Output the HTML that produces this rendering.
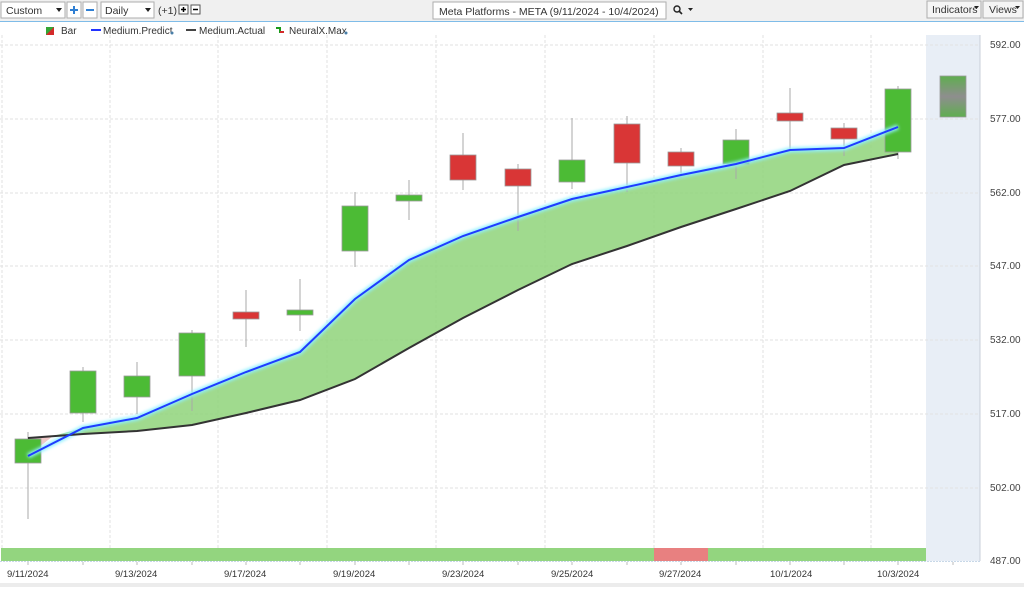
<!DOCTYPE html>
<html><head><meta charset="utf-8"><style>
body{margin:0;width:1024px;height:587px;overflow:hidden;background:#fff;font-family:"Liberation Sans",sans-serif}
svg text{font-family:"Liberation Sans",sans-serif}
</style></head><body>
<svg width="1024" height="587" xmlns="http://www.w3.org/2000/svg">
<defs>
<linearGradient id="fg" x1="0" y1="0" x2="0" y2="1">
<stop offset="0" stop-color="#5fae4f"/><stop offset="0.5" stop-color="#8e8e8e"/><stop offset="1" stop-color="#5fae4f"/>
</linearGradient>
<filter id="glow"><feGaussianBlur stdDeviation="1.5"/></filter>
</defs>
<rect x="0" y="0" width="1024" height="21" fill="#f0f0f0"/>
<rect x="0" y="21" width="1024" height="1" fill="#7fbce8"/>
<rect x="1" y="2" width="64" height="16" fill="#fff" stroke="#adadad"/>
<text x="6" y="14" font-size="10.5" fill="#333">Custom</text>
<path d="M56 8 h6 l-3 4z" fill="#222"/>
<rect x="67" y="2" width="14" height="16" fill="#fff" stroke="#adadad"/>
<path d="M70 10 h8 M74 6 v8" stroke="#2f7fd3" stroke-width="2"/>
<rect x="83" y="2" width="14" height="16" fill="#fff" stroke="#adadad"/>
<path d="M86 10 h8" stroke="#2f7fd3" stroke-width="2"/>
<rect x="101" y="2" width="53" height="16" fill="#fff" stroke="#adadad"/>
<text x="105" y="14" font-size="10.5" fill="#333">Daily</text>
<path d="M145 8 h6 l-3 4z" fill="#222"/>
<text x="158" y="14" font-size="10.5" fill="#333">(+1)</text>
<rect x="179" y="5" width="9" height="9" fill="#fff" stroke="#555"/><path d="M181 9.5h5M183.5 7v5" stroke="#000" stroke-width="1.5"/>
<rect x="191" y="5" width="9" height="9" fill="#fff" stroke="#555"/><path d="M193 9.5h5" stroke="#000" stroke-width="1.5"/>
<rect x="433" y="2" width="233" height="17" fill="#fff" stroke="#adadad"/>
<text x="439" y="15" font-size="10.5" fill="#333">Meta Platforms - META (9/11/2024 - 10/4/2024)</text>
<circle cx="677" cy="9" r="3" fill="none" stroke="#222" stroke-width="1.4"/><path d="M679 11l3 3" stroke="#222" stroke-width="1.6"/>
<path d="M688 8h5l-2.5 3z" fill="#222"/>
<rect x="927" y="1" width="54" height="17" fill="#f5f5f5" stroke="#adadad"/>
<text x="932" y="13" font-size="10.5" fill="#333">Indicators</text><path d="M974 6h5l-2.5 3z" fill="#222"/>
<rect x="983" y="1" width="40" height="17" fill="#f5f5f5" stroke="#adadad"/>
<text x="989" y="13" font-size="10.5" fill="#333">Views</text><path d="M1015 6h5l-2.5 3z" fill="#222"/>
<path d="M46 27h8v8h-8z" fill="#35a535"/><path d="M54 27v8h-8z" fill="#d42a2a"/>
<text x="61" y="34" font-size="10" fill="#333">Bar</text>
<path d="M91 30h10" stroke="#2233ff" stroke-width="2"/>
<text x="103" y="34" font-size="10" fill="#333">Medium.Predict</text><circle cx="172" cy="33" r="1.5" fill="#4a7fa8"/>
<path d="M186 30h10" stroke="#444" stroke-width="2"/>
<text x="199" y="34" font-size="10" fill="#333">Medium.Actual</text>
<path d="M276 28h4v4h4" stroke="#1a9a1a" stroke-width="2" fill="none"/><path d="M280 32h4" stroke="#d42a2a" stroke-width="2"/>
<text x="289" y="34" font-size="10" fill="#333">NeuralX.Max</text><circle cx="346" cy="33" r="1.5" fill="#4a7fa8"/>
<rect x="926" y="35" width="54" height="526" fill="#e8eef6"/>
<g stroke="#e2e2e2" stroke-dasharray="3,2">
<path d="M0 45H980M0 119H980M0 193H980M0 266H980M0 340H980M0 414H980M0 488H980"/>
<path d="M2 35V561M110 35V561M218 35V561M327 35V561M436 35V561M545 35V561M654 35V561M763 35V561M871 35V561"/>
</g>
<path d="M980 35V561" stroke="#c8cfd8"/>
<g font-size="10" fill="#444">
<text x="990" y="48">592.00</text><text x="990" y="122">577.00</text><text x="990" y="196">562.00</text><text x="990" y="269">547.00</text><text x="990" y="343">532.00</text><text x="990" y="417">517.00</text><text x="990" y="491">502.00</text><text x="990" y="564">487.00</text>
</g>
<polygon points="53,436 83,428 137,418 192,394 246,372 300,352 355,299 409,260 463,236 518,217 572,199 627,187 681,175 736,164 790,150 844,148 898,127 898,154 844,165 790,191 736,209 681,227 627,246 572,264 518,290 463,318 409,348 355,379 300,400 246,413 192,425 137,431 83,434" fill="#8fd47a" opacity="0.85"/>
<polygon points="28,438 53,436 28,456" fill="#f0c8c8"/>
<g stroke="#a8a8a8" stroke-width="1">
<path d="M28 432V519M83 367V422M137 362V414M192 330V411M246 290V347M300 279V331M355 192V267M409 180V220M463 133V190M518 164V231M572 118V189M627 116V192M681 148V178M736 129V179M790 88V150M844 123V156M898 86V159"/>
</g>
<g stroke="#9a9a9a" stroke-width="0.8">
<g fill="#4cbb35">
<rect x="15" y="439" width="26" height="24"/><rect x="70" y="371" width="26" height="42"/><rect x="124" y="376" width="26" height="21"/><rect x="179" y="333" width="26" height="43"/><rect x="287" y="310" width="26" height="5"/><rect x="342" y="206" width="26" height="45"/><rect x="396" y="195" width="26" height="6"/><rect x="559" y="160" width="26" height="22"/><rect x="723" y="140" width="26" height="24"/><rect x="885" y="89" width="26" height="63"/>
</g>
<g fill="#d93636">
<rect x="233" y="312" width="26" height="7"/><rect x="450" y="155" width="26" height="25"/><rect x="505" y="169" width="26" height="17"/><rect x="614" y="124" width="26" height="39"/><rect x="668" y="152" width="26" height="14"/><rect x="777" y="113" width="26" height="8"/><rect x="831" y="128" width="26" height="11"/>
</g>
<rect x="940" y="76" width="26" height="41" fill="url(#fg)"/>
</g>
<polyline points="28,456 83,428 137,418 192,394 246,372 300,352 355,299 409,260 463,236 518,217 572,199 627,187 681,175 736,164 790,150 844,148 898,127" fill="none" stroke="#8ff0ff" stroke-width="5" filter="url(#glow)"/>
<polyline points="28,438 83,434 137,431 192,425 246,413 300,400 355,379 409,348 463,318 518,290 572,264 627,246 681,227 736,209 790,191 844,165 898,154" fill="none" stroke="#333" stroke-width="2"/>
<polyline points="28,456 83,428 137,418 192,394 246,372 300,352 355,299 409,260 463,236 518,217 572,199 627,187 681,175 736,164 790,150 844,148 898,127" fill="none" stroke="#1f3cff" stroke-width="2"/>
<rect x="1" y="548" width="925" height="13" fill="#93d57f"/>
<rect x="654" y="548" width="54" height="13" fill="#e88080"/>
<path d="M0 561.5H980" stroke="#c8d8e8" stroke-dasharray="2,1"/>
<g stroke="#bbb"><path d="M28 562v3M83 562v3M137 562v3M192 562v3M246 562v3M300 562v3M355 562v3M409 562v3M463 562v3M518 562v3M572 562v3M627 562v3M681 562v3M736 562v3M790 562v3M844 562v3M898 562v3M953 562v3"/></g>
<g font-size="9.5" fill="#333">
<text x="7" y="577">9/11/2024</text><text x="115" y="577">9/13/2024</text><text x="224" y="577">9/17/2024</text><text x="333" y="577">9/19/2024</text><text x="442" y="577">9/23/2024</text><text x="551" y="577">9/25/2024</text><text x="659" y="577">9/27/2024</text><text x="770" y="577">10/1/2024</text><text x="877" y="577">10/3/2024</text>
</g>
<rect x="0" y="583" width="1024" height="4" fill="#ececec"/>
</svg>
</body></html>
